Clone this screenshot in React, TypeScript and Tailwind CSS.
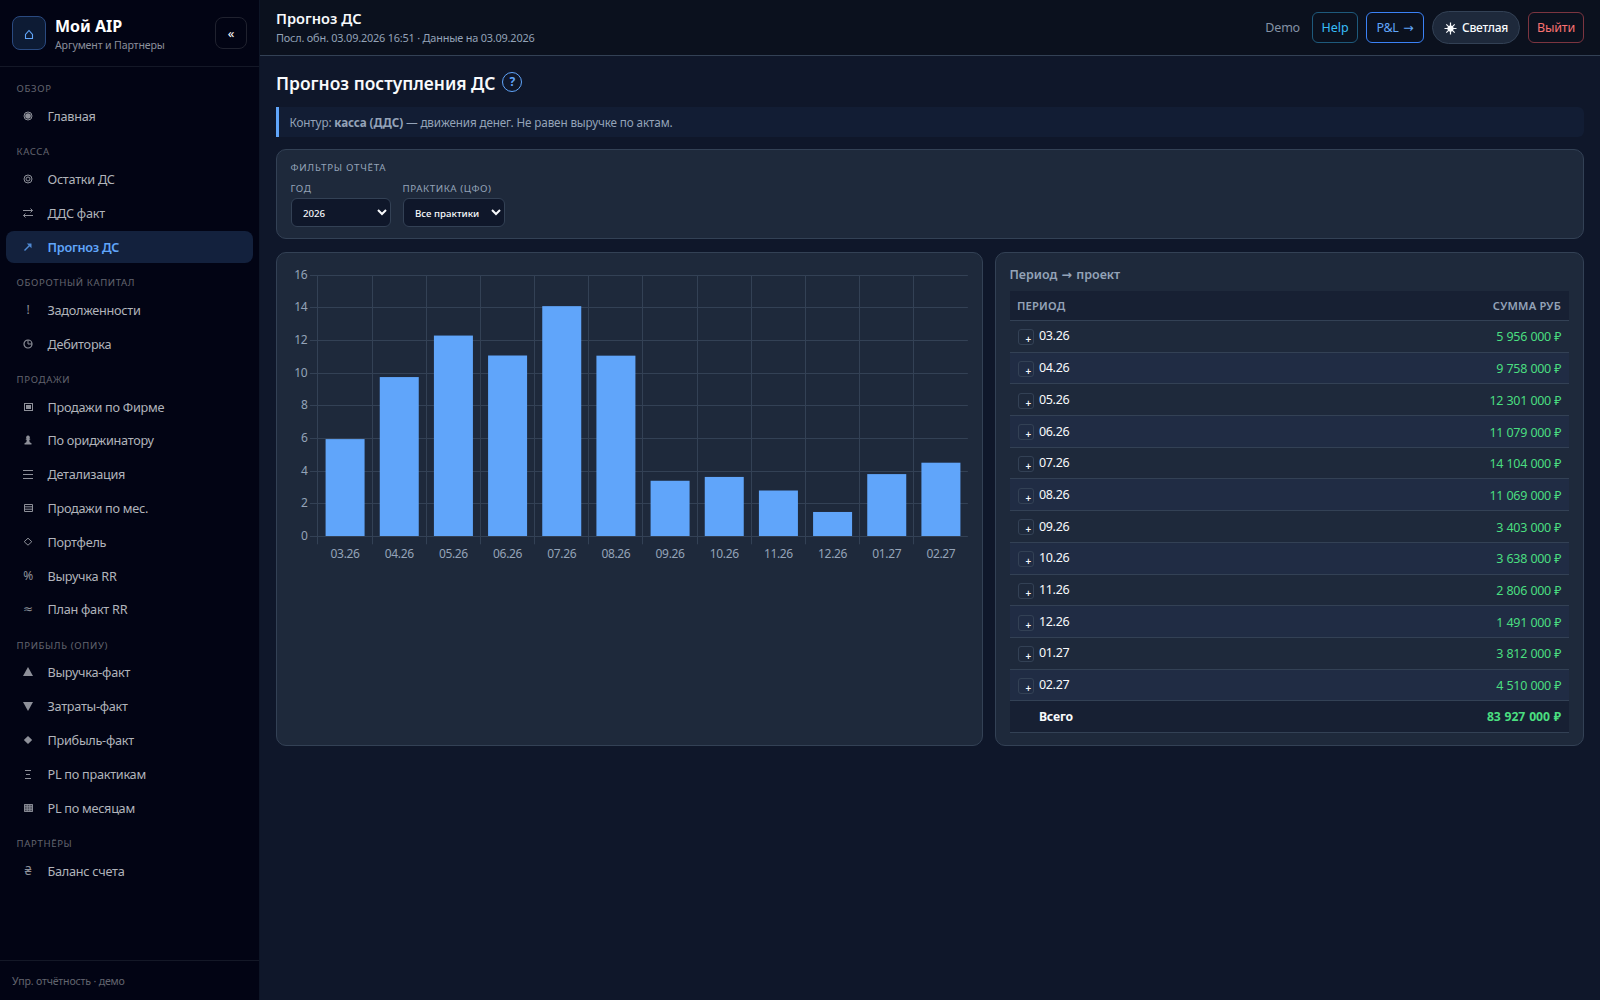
import type { ReactNode } from "react";

interface NavItem {
  icon: ReactNode;
  label: string;
  active?: boolean;
}

interface NavSection {
  title: string;
  items: NavItem[];
}

function Glyph({ children, filled = false }: { children: ReactNode; filled?: boolean }) {
  return (
    <svg
      width="12"
      height="12"
      viewBox="0 0 12 12"
      fill={filled ? "currentColor" : "none"}
      stroke={filled ? "none" : "currentColor"}
      strokeWidth="1"
    >
      {children}
    </svg>
  );
}

const NAV: NavSection[] = [
  {
    title: "Обзор",
    items: [
      {
        icon: (
          <Glyph>
            <circle cx="6" cy="6" r="4" />
            <circle cx="6" cy="6" r="2.8" fill="currentColor" stroke="none" />
          </Glyph>
        ),
        label: "Главная",
      },
    ],
  },
  {
    title: "Касса",
    items: [
      {
        icon: (
          <Glyph>
            <circle cx="6" cy="6" r="4" />
            <circle cx="6" cy="6" r="2" />
          </Glyph>
        ),
        label: "Остатки ДС",
      },
      {
        icon: (
          <Glyph>
            <path d="M1 3.5H10.5M8.5 1.5L10.5 3.5L8.5 5.5M11 8.5H1.5M3.5 6.5L1.5 8.5L3.5 10.5" />
          </Glyph>
        ),
        label: "ДДС факт",
      },
      {
        icon: (
          <Glyph>
            <path d="M2.5 9.5L8 4" strokeWidth="1.4" />
            <path d="M4.8 2.5H9.5V7.2Z" fill="currentColor" stroke="none" />
          </Glyph>
        ),
        label: "Прогноз ДС",
        active: true,
      },
    ],
  },
  {
    title: "Оборотный капитал",
    items: [
      { icon: "!", label: "Задолженности" },
      {
        icon: (
          <Glyph>
            <circle cx="6" cy="6" r="4" strokeWidth="1.2" />
            <path d="M6 2V6H10" />
          </Glyph>
        ),
        label: "Дебиторка",
      },
    ],
  },
  {
    title: "Продажи",
    items: [
      {
        icon: (
          <Glyph>
            <rect x="2.5" y="2.5" width="8" height="7" />
            <rect x="4" y="4" width="5" height="4" fill="currentColor" stroke="none" />
          </Glyph>
        ),
        label: "Продажи по Фирме",
      },
      {
        icon: (
          <Glyph filled>
            <path d="M6 1.5A2 2 0 0 1 7.4 4.8H8.2V5.8H7.2L7.7 8.2L9.5 9.3V10.5H2.5V9.3L4.3 8.2L4.8 5.8H3.8V4.8H4.6A2 2 0 0 1 6 1.5Z" />
          </Glyph>
        ),
        label: "По ориджинатору",
      },
      {
        icon: (
          <Glyph>
            <path d="M1 2.5H11M1 6.5H11M1 10.5H11" />
          </Glyph>
        ),
        label: "Детализация",
      },
      {
        icon: (
          <Glyph>
            <path d="M2.5 2.5H10.5V9.5H2.5ZM2.5 4.8H10.5M2.5 7.2H10.5" />
          </Glyph>
        ),
        label: "Продажи по мес.",
      },
      {
        icon: (
          <Glyph>
            <path d="M6 2.2L9.8 5.7L6 9.2L2.2 5.7Z" />
          </Glyph>
        ),
        label: "Портфель",
      },
      { icon: "%", label: "Выручка RR" },
      { icon: "≈", label: "План факт RR" },
    ],
  },
  {
    title: "Прибыль (ОПиУ)",
    items: [
      {
        icon: (
          <Glyph filled>
            <path d="M6 1L11 10H1Z" />
          </Glyph>
        ),
        label: "Выручка-факт",
      },
      {
        icon: (
          <Glyph filled>
            <path d="M6 11L11 2H1Z" />
          </Glyph>
        ),
        label: "Затраты-факт",
      },
      {
        icon: (
          <Glyph filled>
            <path d="M6 2L10.2 6L6 10L1.8 6Z" />
          </Glyph>
        ),
        label: "Прибыль-факт",
      },
      {
        icon: (
          <Glyph>
            <path d="M3 2.5H9M4 6.5H8M3 10.5H9" />
          </Glyph>
        ),
        label: "PL по практикам",
      },
      {
        icon: (
          <Glyph>
            <rect x="2" y="2" width="9" height="8" fill="currentColor" fillOpacity="0.45" stroke="none" />
            <path d="M2.5 2.5H10.5V9.5H2.5ZM2.5 4.8H10.5M2.5 7.2H10.5M5.2 2.5V9.5M7.8 2.5V9.5" strokeWidth="0.9" />
          </Glyph>
        ),
        label: "PL по месяцам",
      },
    ],
  },
  { title: "Партнёры", items: [{ icon: "₴", label: "Баланс счета" }] },
];

const ROWS = [
  { period: "03.26", sum: 5956000 },
  { period: "04.26", sum: 9758000 },
  { period: "05.26", sum: 12301000 },
  { period: "06.26", sum: 11079000 },
  { period: "07.26", sum: 14104000 },
  { period: "08.26", sum: 11069000 },
  { period: "09.26", sum: 3403000 },
  { period: "10.26", sum: 3638000 },
  { period: "11.26", sum: 2806000 },
  { period: "12.26", sum: 1491000 },
  { period: "01.27", sum: 3812000 },
  { period: "02.27", sum: 4510000 },
];

const total = ROWS.reduce((acc, r) => acc + r.sum, 0);

const formatRub = (n: number) => `${String(n).replace(/\B(?=(\d{3})+(?!\d))/g, "\u00a0")} ₽`;

function Sidebar() {
  return (
    <aside className="flex w-[260px] shrink-0 flex-col border-r border-[#0d1526] bg-[#020414]">
      <div className="flex h-[67px] shrink-0 items-center border-b border-[#141827] px-3">
        <div className="flex h-[34px] w-[34px] items-center justify-center rounded-lg border border-[#2a4a80] bg-[#0d1b34] text-[#60a5fa]">
          <svg width="12" height="12" viewBox="0 0 12 12" fill="none" stroke="currentColor" strokeWidth="1.1" className="mt-[3px]">
            <path d="M2.5 9.5V5.5L6 1.5L9.5 5.5V9.5Z" />
          </svg>
        </div>
        <div className="mt-[3px] ml-[9px] flex-1">
          <div className="text-[16px] leading-[20px] font-bold text-white">Мой AIP</div>
          <div className="text-[10.6px] leading-[18px] tracking-[-0.15px] text-[#8b8f9b]">Аргумент и Партнеры</div>
        </div>
        <button className="flex h-8 w-8 items-center justify-center rounded-lg border border-[#20222f] pt-[2px] text-[13px] text-white">
          «
        </button>
      </div>

      <nav className="flex-1 px-1.5 pt-[4.2px]">
        {NAV.map((section) => (
          <div key={section.title}>
            <div className="h-[29.4px] px-[10.5px] pt-[10px] text-[9.6px] leading-[16px] tracking-[0.65px] text-[#62656f] uppercase">
              {section.title}
            </div>
            {section.items.map((item) => (
              <a
                key={item.label}
                className={`mb-[2px] flex h-[31.77px] items-center rounded-lg text-[12.7px] tracking-[-0.27px] ${
                  item.active ? "bg-[#13213d] font-semibold text-[#60a5fa]" : "text-[#b1b4bb]"
                }`}
              >
                <span className="ml-[11px] flex w-[22px] justify-center pb-[1px] text-[12px] leading-[16px] opacity-80">
                  {item.icon}
                </span>
                <span className="ml-[8.5px]">{item.label}</span>
              </a>
            ))}
          </div>
        ))}
      </nav>

      <div className="h-[40px] shrink-0 border-t border-[#141827] px-3 pt-[12px] text-[10.6px] leading-[17px] tracking-[-0.18px] text-[#62656f]">
        Упр. отчётность · демо
      </div>
    </aside>
  );
}

function SunIcon() {
  return (
    <svg width="13" height="13" viewBox="0 0 13 13" stroke="currentColor" strokeWidth="1.2">
      <circle cx="6.5" cy="6.5" r="3.1" fill="currentColor" stroke="none" />
      <path d="M6.5 0.5V12.5M0.5 6.5H12.5M2.3 2.3L10.7 10.7M10.7 2.3L2.3 10.7" />
    </svg>
  );
}

function Header() {
  return (
    <header className="flex h-[56px] shrink-0 items-center justify-between border-b border-[#334155] bg-[#0b111e] px-4">
      <div>
        <div className="text-[14.6px] leading-[20px] font-semibold text-[#f8fafc]">Прогноз ДС</div>
        <div className="mt-px text-[10.9px] leading-[18px] tracking-[-0.19px] text-[#94a3b8]">
          Посл. обн. 03.09.2026 16:51 · Данные на 03.09.2026
        </div>
      </div>
      <div className="flex items-center gap-2 text-[12.5px] tracking-[-0.2px]">
        <span className="mt-[2px] mr-1 text-[#8491a5]">Demo</span>
        <button className="h-[31px] w-[46px] rounded-md border border-[#1e5a7c] pt-[2px] tracking-normal text-[#38bdf8]">
          Help
        </button>
        <button className="h-[31px] w-[58px] rounded-md border border-[#3b82f6] pt-[2px] text-[#60a5fa]">
          <span className="tracking-[-0.4px]">P&amp;L</span>
          <span className="ml-[5px]">→</span>
        </button>
        <button className="flex h-[33px] w-[88px] items-center justify-center gap-[5px] rounded-full border border-[#334155] bg-[#1e293b] pt-[1px] text-[12px] font-medium text-[#f8fafc]">
          <SunIcon />
          <span>Светлая</span>
        </button>
        <button className="h-[31px] w-[56px] rounded-md border border-[#7c3540] pt-[2px] text-[#f87171]">Выйти</button>
      </div>
    </header>
  );
}

function Card({ className, children }: { className: string; children: ReactNode }) {
  return <section className={`rounded-[10px] border border-[#334155] bg-[#1e293b] ${className}`}>{children}</section>;
}

function FilterSelect({ label, value, width }: { label: string; value: string; width: number }) {
  return (
    <label className="flex flex-col text-[9.8px] leading-[16px] tracking-[0.55px] text-[#94a3b8] uppercase">
      <span className="-ml-[0.5px]">{label}</span>
      <select
        className="mt-px h-[29px] rounded-md border border-[#334155] bg-[#0f172a] pt-px pr-0 pl-[7px] text-[9.7px] font-medium tracking-normal text-[#f8fafc] normal-case"
        style={{ width }}
      >
        <option>{value}</option>
      </select>
    </label>
  );
}

function Filters() {
  return (
    <Card className="mt-3 h-[90px] px-[14px] pt-[10px]">
      <div className="-ml-[0.5px] text-[9.8px] leading-[16px] tracking-[0.72px] text-[#94a3b8] uppercase">Фильтры отчёта</div>
      <div className="mt-[5px] flex gap-3">
        <FilterSelect label="Год" value="2026" width={100} />
        <FilterSelect label="Практика (ЦФО)" value="Все практики" width={102} />
      </div>
    </Card>
  );
}

// plot area, in svg pixels
const LEFT = 40.9;
const RIGHT = 690.9;
const TOP = 22.2;
const BOTTOM = 283.3;
const STEP = (RIGHT - LEFT) / ROWS.length;
const BAR = 39;

function Chart() {
  const y = (v: number) => BOTTOM - (v / 16) * (BOTTOM - TOP);
  return (
    <svg width="705" height="320" className="block text-[12px] tracking-[-0.35px]">
      {[0, 2, 4, 6, 8, 10, 12, 14, 16].map((v) => {
        const gy = Math.floor(y(v)) + 0.5;
        return (
          <g key={v}>
            <line x1={LEFT - 8} x2={RIGHT} y1={gy} y2={gy} stroke="#334155" />
            <text x={LEFT - 10.5} y={gy + 3.5} textAnchor="end" fill="#94a3b8">
              {v}
            </text>
          </g>
        );
      })}
      {ROWS.map((r, i) => {
        const gx = Math.floor(LEFT + i * STEP) + 0.5;
        return <line key={r.period} x1={gx} x2={gx} y1={TOP} y2={BOTTOM + 8} stroke="#334155" />;
      })}
      {ROWS.map((r, i) => {
        const cx = LEFT + (i + 0.5) * STEP + 0.1;
        const top = y(r.sum / 1e6);
        return (
          <g key={r.period}>
            <rect x={cx - BAR / 2} y={top} width={BAR} height={BOTTOM - 0.3 - top} fill="#60a5fa" />
            <text x={cx} y={BOTTOM + 21.7} textAnchor="middle" fill="#94a3b8">
              {r.period}
            </text>
          </g>
        );
      })}
    </svg>
  );
}

function PeriodTable() {
  return (
    <div className="mt-[7px]">
      <div className="flex h-[30px] items-center justify-between border-b border-[#334155] bg-[#172033] pt-[2px] pr-2 pl-[7px] text-[11.2px] font-semibold tracking-[0.2px] text-[#94a3b8] uppercase">
        <span>Период</span>
        <span>Сумма руб</span>
      </div>
      {ROWS.map((r) => (
        <div
          key={r.period}
          className="flex h-[31.69px] items-center border-b border-[#334155] px-2 text-[12.5px] tracking-[-0.3px] odd:bg-[#202c44]"
        >
          <button className="mt-[2px] flex h-4 w-4 items-end justify-end rounded-[3px] border border-[#334155] pr-[2px] text-[10px] leading-[10px] font-semibold text-[#f8fafc]">
            +
          </button>
          <span className="mt-px ml-[5px] flex-1 text-[#f8fafc]">{r.period}</span>
          <span className="mt-[3px] -mr-[0.3px] text-[#4ade80] [word-spacing:0.4px]">{formatRub(r.sum)}</span>
        </div>
      ))}
      <div className="flex h-[31.69px] items-center justify-between border-b border-[#334155] bg-[#172033] pt-[2px] pr-2 pl-[29px] text-[12.2px] font-bold tracking-[-0.1px]">
        <span className="text-[#f8fafc]">Всего</span>
        <span className="text-[#4ade80] [word-spacing:0.9px]">{formatRub(total)}</span>
      </div>
    </div>
  );
}

export default function App() {
  return (
    <div className="flex h-[1000px] w-[1600px] overflow-hidden bg-[#0f172a] font-['Noto_Sans','DejaVu_Sans',sans-serif]">
      <Sidebar />
      <div className="flex min-w-0 flex-1 flex-col">
        <Header />
        <main className="flex-1 px-4 pt-4">
          <div className="flex h-[24px] items-center">
            <h1 className="mb-[2px] text-[17.4px] leading-[24px] font-semibold text-[#f8fafc]">Прогноз поступления ДС</h1>
            <span className="mb-[4px] ml-[7px] flex h-5 w-5 items-center justify-center rounded-full border border-[#60a5fa] text-[12px] font-bold text-[#60a5fa]">
              ?
            </span>
          </div>
          <div className="mt-[11px] h-[30px] rounded-r-md border-l-[3px] border-[#60a5fa] bg-[#121d34] pl-[10.5px] text-[11.7px] leading-[31px] tracking-[-0.13px] text-[#94a3b8]">
            Контур: <b>касса (ДДС)</b> — движения денег. Не равен выручке по актам.
          </div>
          <Filters />
          <div className="mt-[13px] grid grid-cols-[1.2fr_1fr] gap-3">
            <Card className="h-[494px] min-w-0 overflow-hidden">
              <Chart />
            </Card>
            <Card className="h-[494px] px-[14px] pt-[13px]">
              <div className="-ml-[0.5px] text-[12.5px] leading-[18px] font-semibold text-[#94a3b8]">
                Период <span className="mx-px">→</span> проект
              </div>
              <PeriodTable />
            </Card>
          </div>
        </main>
      </div>
    </div>
  );
}
